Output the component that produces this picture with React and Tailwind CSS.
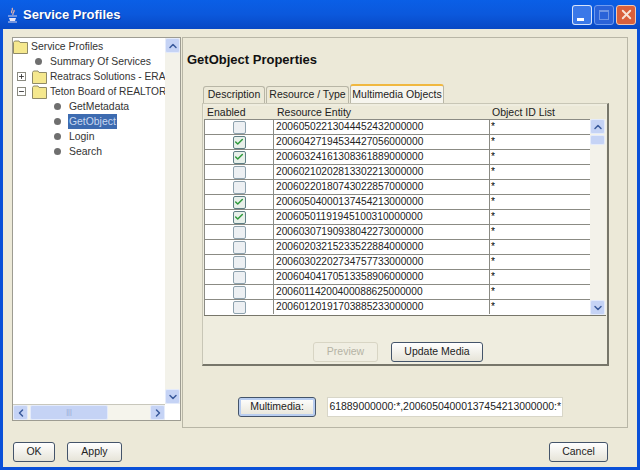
import React from 'react';
import { Check, ChevronUp, ChevronDown, ChevronLeft, ChevronRight, Minus, Plus, X } from 'lucide-react';

const rows = [
  ['20060502213044452432000000', false],
  ['20060427194534427056000000', true],
  ['20060324161308361889000000', true],
  ['20060210202813302213000000', false],
  ['20060220180743022857000000', false],
  ['20060504000137454213000000', true],
  ['20060501191945100310000000', true],
  ['20060307190938042273000000', false],
  ['20060203215233522884000000', false],
  ['20060302202734757733000000', false],
  ['20060404170513358906000000', false],
  ['20060114200400088625000000', false],
  ['20060120191703885233000000', false],
];

const Folder = () => (
  <svg width="15" height="14" viewBox="0 0 15 14" className="shrink-0 block">
    <path d="M0.5 2.5 L1.5 1 H6 L7 2.5 H14.5 V13.5 H0.5 Z" fill="#f5e88e" stroke="#8f8a68" />
  </svg>
);

const Dot = () => <span className="w-[7px] h-[7px] rounded-full bg-[#6f6f6f] shrink-0" />;

const ScrollBtn = ({ icon: Icon, className = '' }) => (
  <div className={`w-[15px] h-[15px] shrink-0 flex items-center justify-center rounded-[2px] bg-[#c5d3f5] border border-[#e4ebfb] ${className}`}>
    <Icon size={12} strokeWidth={3} className="text-[#3a5a9c]" />
  </div>
);

const XpButton = ({ children, className = '', focused = false, disabled = false }) => (
  <button
    className={`h-[20px] rounded-[3px] border flex items-center justify-center text-[10.5px] ${
      disabled
        ? 'border-[#d8d5c4] bg-[#f0eee2] text-[#b5b3a5]'
        : 'border-[#44546a] bg-gradient-to-b from-white to-[#e6e4d8] text-[#222222]'
    } ${focused ? 'shadow-[inset_0_0_0_2px_#b8cdf0]' : ''} ${className}`}
  >
    {children}
  </button>
);

const CheckCell = ({ on }) => (
  <div className={`w-[13px] h-[13px] rounded-[2px] border flex items-center justify-center ${on ? 'border-[#5f7f86] bg-[#e8f0ea]' : 'border-[#8ea2ae] bg-[#edf0f3]'}`}>
    {on && <Check size={10} strokeWidth={3.5} className="text-[#2f9a3c]" />}
  </div>
);

const TreeRow = ({ indent, children }) => (
  <div className={`h-[15px] flex items-center whitespace-nowrap ${indent}`}>{children}</div>
);

const App = () => {
  return (
    <div
      className="w-[640px] h-[470px] overflow-hidden flex flex-col bg-[#0a50d8] text-[#333333] text-[10.4px]"
      style={{ fontFamily: '"Liberation Sans", Arial, sans-serif' }}
    >
      {/* Title bar */}
      <div className="h-[29px] shrink-0 flex items-center pl-[6px] pr-[4px] bg-gradient-to-b from-[#0a5fe6] via-[#0b58dc] to-[#0848c4]">
        <svg width="13" height="16" viewBox="0 0 13 16" className="shrink-0">
          <path d="M3 11 H10 L9 14 H4 Z" fill="#e8e4f4" />
          <path d="M6 1 C8 3 4 4 6 6 M8 3 C9 5 6 6 7 8" stroke="#f0b8a8" strokeWidth="1.2" fill="none" />
          <path d="M2 9 H11 M2 15 H11" stroke="#d8d4ec" strokeWidth="1" />
        </svg>
        <span className="ml-[4px] text-[13px] font-bold text-white [text-shadow:1px_1px_0_#0a3a9c]">Service Profiles</span>
        <div className="ml-auto flex gap-[2px]">
          <div className="w-[20px] h-[20px] rounded-[3px] border border-white/80 bg-[#3a78e8] flex items-end justify-center pb-[3px] pr-[4px]">
            <div className="w-[7px] h-[3px] bg-white" />
          </div>
          <div className="w-[20px] h-[20px] rounded-[3px] border border-[#6f9bef] bg-[#2a62d8] flex items-center justify-center">
            <div className="w-[10px] h-[10px] border border-[#6f95e4] border-t-2" />
          </div>
          <div className="w-[20px] h-[20px] rounded-[3px] border border-[#f2c8b0] bg-[#d9603c] flex items-center justify-center">
            <X size={15} strokeWidth={3} className="text-[#f7e4d8]" />
          </div>
        </div>
      </div>

      {/* Window body */}
      <div className="flex-1 min-h-0 mx-[3px] mb-[3px] bg-[#ece9d8] flex flex-col">
        <div className="flex h-[391px] mt-[8px] pl-[9px] pr-[9px] shrink-0">
          {/* Left tree */}
          <div className="w-[169px] h-[384px] shrink-0 border border-[#9d9c92] bg-white flex flex-col">
            <div className="flex-1 min-h-0 flex">
              <div className="flex-1 min-w-0 overflow-hidden pt-[1px] flex flex-col">
                <TreeRow indent="">
                  <Folder />
                  <span className="ml-[3px]">Service Profiles</span>
                </TreeRow>
                <TreeRow indent="pl-[22px]">
                  <Dot />
                  <span className="ml-[8px]">Summary Of Services</span>
                </TreeRow>
                <TreeRow indent="pl-[4px]">
                  <div className="w-[9px] h-[9px] border border-[#8a8a80] flex items-center justify-center shrink-0">
                    <Plus size={7} strokeWidth={3} />
                  </div>
                  <span className="ml-[6px]"><Folder /></span>
                  <span className="ml-[3px] text-[10.2px]">Reatracs Solutions - ERA</span>
                </TreeRow>
                <TreeRow indent="pl-[4px]">
                  <div className="w-[9px] h-[9px] border border-[#8a8a80] flex items-center justify-center shrink-0">
                    <Minus size={7} strokeWidth={3} />
                  </div>
                  <span className="ml-[6px]"><Folder /></span>
                  <span className="ml-[3px] text-[10.2px]">Teton Board of REALTOR</span>
                </TreeRow>
                <TreeRow indent="pl-[41px]">
                  <Dot />
                  <span className="ml-[8px]">GetMetadata</span>
                </TreeRow>
                <TreeRow indent="pl-[41px]">
                  <Dot />
                  <span className="ml-[7px] px-[1px] bg-[#3d6bb0] text-[#c8d8f0]">GetObject</span>
                </TreeRow>
                <TreeRow indent="pl-[41px]">
                  <Dot />
                  <span className="ml-[8px]">Login</span>
                </TreeRow>
                <TreeRow indent="pl-[41px]">
                  <Dot />
                  <span className="ml-[8px]">Search</span>
                </TreeRow>
              </div>
              <div className="w-[15px] shrink-0 flex flex-col justify-between bg-[#f3f2ea]">
                <ScrollBtn icon={ChevronUp} />
                <ScrollBtn icon={ChevronDown} />
              </div>
            </div>
            <div className="h-[16px] shrink-0 flex mr-[15px] bg-[#f5f4ec] border-t border-[#c8c7bc]">
              <ScrollBtn icon={ChevronLeft} />
              <div className="w-[78px] ml-[2px] bg-[#c5d3f5] border border-[#e4ebfb] rounded-[2px] flex items-center justify-center text-[7px] text-[#8fa3d0]">|||</div>
              <div className="flex-1" />
              <ScrollBtn icon={ChevronRight} />
            </div>
          </div>

          {/* Right side */}
          <div className="w-[446px] shrink-0 ml-[1px] border border-[#b8b6a6] flex flex-col pl-[4px]">
            <div className="text-[13px] font-bold text-[#111111] mt-[14px] h-[16px] leading-[16px]">GetObject Properties</div>

            {/* Tabs */}
            <div className="flex items-end mt-[15px] ml-[16px] h-[20px] text-[10.5px] text-[#222222]">
              <div className="w-[62px] h-[17px] rounded-t-[3px] border border-b-0 border-[#b8b6a6] flex items-center justify-center">Description</div>
              <div className="w-[83px] h-[17px] ml-[1px] rounded-t-[3px] border border-b-0 border-[#b8b6a6] flex items-center justify-center">Resource / Type</div>
              <div className="w-[94px] h-[19px] ml-[1px] rounded-t-[3px] border border-b-0 border-[#b8b6a6] border-t-2 border-t-[#f0b840] bg-[#f6f5ee] flex items-center justify-center">Multimedia Objects</div>
            </div>

            {/* Tab panel */}
            <div className="w-[407px] h-[263px] ml-[15px] border border-t-[#c8c6b6] border-l-[#c8c6b6] border-r-[#77766a] border-b-[#77766a] border-b-2 border-r-2 flex flex-col bg-[#efeddf] pl-[1px] pt-[2px]">
              <div className="w-[402px] h-[210px] border-b border-[#77766a] flex flex-col">
                <div className="h-[13px] shrink-0 flex bg-[#ece9d8] text-[#222222] text-[10.5px] leading-[13px]">
                  <div className="w-[70px] pl-[3px]">Enabled</div>
                  <div className="w-[216px] pl-[3px]">Resource Entity</div>
                  <div className="w-[100px] pl-[2px]">Object ID List</div>
                </div>
                <div className="flex-1 min-h-0 flex">
                  <div className="w-[386px] shrink-0 bg-white border-l border-[#8b8b84] overflow-hidden">
                    {rows.map(([id, on]) => (
                      <div key={id} className="h-[15px] flex border-t border-[#8b8b84] text-[10.2px] leading-[14px] text-[#222222]">
                        <div className="w-[69px] shrink-0 flex items-center justify-center border-r border-[#8b8b84]"><CheckCell on={on} /></div>
                        <div className="w-[216px] shrink-0 pl-[2px] border-r border-[#8b8b84]">{id}</div>
                        <div className="pl-[1px] text-black">*</div>
                      </div>
                    ))}
                  </div>
                  <div className="w-[16px] shrink-0 flex flex-col bg-[#f3f2ea]">
                    <ScrollBtn icon={ChevronUp} />
                    <div className="w-[15px] h-[10px] mt-[1px] bg-[#c5d3f5] border border-[#e4ebfb] rounded-[2px]" />
                    <div className="flex-1" />
                    <ScrollBtn icon={ChevronDown} />
                  </div>
                </div>
              </div>
              <div className="flex mt-[26px] ml-[109px] gap-[13px]">
                <XpButton disabled className="w-[65px]">Preview</XpButton>
                <XpButton className="w-[92px]">Update Media</XpButton>
              </div>
            </div>

            {/* Multimedia field */}
            <div className="flex items-center mt-[31px] ml-[51px]">
              <XpButton focused className="w-[78px]">Multimedia:</XpButton>
              <div className="w-[236px] h-[20px] ml-[11px] bg-white border border-[#d8d6c8] flex items-center justify-end pr-[1px] text-[10.45px] text-[#222222] overflow-hidden whitespace-nowrap">
                61889000000:*,20060504000137454213000000:*
              </div>
            </div>
          </div>
        </div>

        {/* Footer buttons */}
        <div className="flex mt-[14px] pl-[10px] pr-[29px]">
          <XpButton className="w-[42px]">OK</XpButton>
          <XpButton className="w-[55px] ml-[12px]">Apply</XpButton>
          <XpButton className="w-[59px] ml-auto">Cancel</XpButton>
        </div>
      </div>
    </div>
  );
};

export default App;
